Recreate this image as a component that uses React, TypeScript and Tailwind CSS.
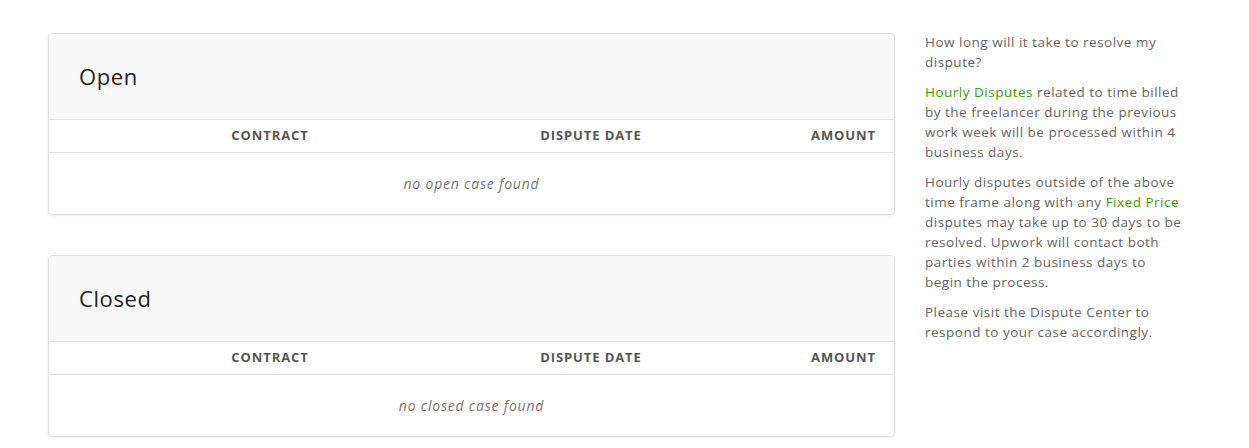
import React from 'react';

const font = { fontFamily: '"Open Sans", "Liberation Sans", sans-serif' };

function CaseTable({ title, empty }: { title: string; empty: string }) {
  return (
    <div className="bg-white border border-[#e0e0e0] rounded-[4px] shadow-[0_1px_2px_rgba(0,0,0,0.08)] overflow-hidden">
      <div className="bg-[#f9f9f9] h-[86px] flex items-center px-[30px] border-b border-[#e0e0e0]">
        <h2 className="text-[22px] text-[#222] m-0 font-normal tracking-[0.6px]">{title}</h2>
      </div>
      <div className="flex h-[33px] items-center border-b border-[#e0e0e0] text-[13px] font-bold uppercase text-[#555] tracking-[0.9px]">
        <div className="w-[442px] text-center">Contract</div>
        <div className="w-[200px] text-center">Dispute Date</div>
        <div className="flex-1 text-right pr-[18px]">Amount</div>
      </div>
      <div className="h-[61px] flex items-center justify-center text-[14px] italic text-[#777] tracking-[0.8px]">{empty}</div>
    </div>
  );
}

export default function App() {
  return (
    <div className="bg-white min-h-[448px] w-[1249px] flex pl-[48px] pt-[33px]" style={font}>
      <div className="w-[847px] flex flex-col gap-[40px]">
        <CaseTable title="Open" empty="no open case found" />
        <CaseTable title="Closed" empty="no closed case found" />
      </div>
      <aside className="ml-[30px] w-[258px] text-[13.5px] leading-[20px] tracking-[0.5px] text-[#656565] -mt-[1px]">
        <p className="mb-[10px]">How long will it take to resolve my dispute?</p>
        <p className="mb-[10px]">
          <span className="text-[#37a000]">Hourly Disputes</span> related to time billed by the freelancer during the
          previous work week will be processed within 4 business days.
        </p>
        <p className="mb-[10px]">
          Hourly disputes outside of the above time frame along with any{' '}
          <span className="text-[#37a000]">Fixed Price</span> disputes may take up to 30 days to be resolved. Upwork
          will contact both parties within 2 business days to begin the process.
        </p>
        <p>Please visit the Dispute Center to respond to your case accordingly.</p>
      </aside>
    </div>
  );
}
